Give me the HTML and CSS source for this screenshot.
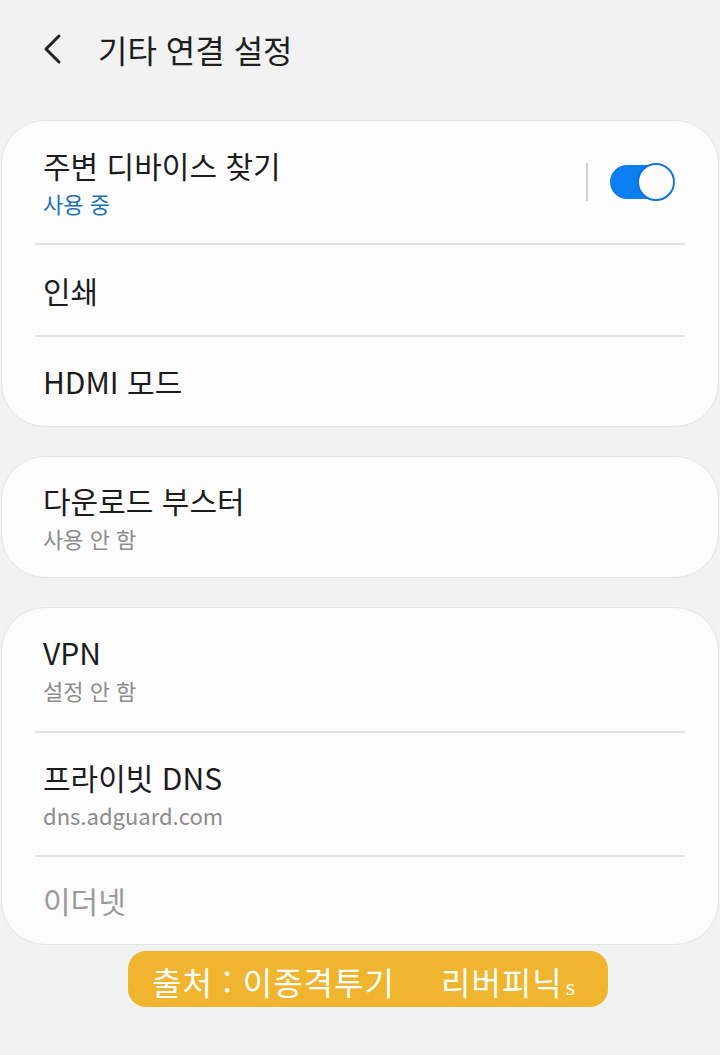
FILE: index.html
```html
<!DOCTYPE html>
<html lang="ko">
<head>
<meta charset="utf-8">
<link rel="stylesheet" href="styles.css">
</head>
<body>
<div class="page">
  <header class="header">
    <svg class="back" width="22" height="32" viewBox="0 0 22 32"><path d="M17 3 L4 16 L17 29" fill="none" stroke="#222" stroke-width="3" stroke-linecap="round" stroke-linejoin="round"/></svg>
    <h1 class="title">기타 연결 설정</h1>
  </header>

  <section class="card">
    <div class="row h122 row-switch">
      <div class="texts">
        <div class="primary">주변 디바이스 찾기</div>
        <div class="secondary on">사용 중</div>
      </div>
      <div class="switch-wrap">
        <span class="vline"></span>
        <span class="switch"><span class="knob"></span></span>
      </div>
    </div>
    <div class="divider"></div>
    <div class="row h90"><div class="primary">인쇄</div></div>
    <div class="divider"></div>
    <div class="row h89"><div class="primary">HDMI 모드</div></div>
  </section>

  <section class="card">
    <div class="row h120">
      <div class="texts">
        <div class="primary">다운로드 부스터</div>
        <div class="secondary">사용 안 함</div>
      </div>
    </div>
  </section>

  <section class="card">
    <div class="row h123">
      <div class="texts">
        <div class="primary">VPN</div>
        <div class="secondary">설정 안 함</div>
      </div>
    </div>
    <div class="divider"></div>
    <div class="row h122">
      <div class="texts">
        <div class="primary">프라이빗 DNS</div>
        <div class="secondary">dns.adguard.com</div>
      </div>
    </div>
    <div class="divider"></div>
    <div class="row h87"><div class="primary disabled">이더넷</div></div>
  </section>

  <div class="badge"><span>출처 : 이종격투기</span><span class="badge-right">리버피닉<span class="s">s</span></span></div>
</div>
</body>
</html>
```

FILE: styles.css
```css
html, body {
  margin: 0;
  padding: 0;
  background: #f2f2f2;
}
body {
  font-family: "Noto Sans CJK KR", "Noto Sans", sans-serif;
  color: #1c1c1c;
}
.page {
  width: 720px;
  height: 1055px;
  overflow: hidden;
}
.header {
  height: 100px;
  display: flex;
  align-items: center;
  box-sizing: border-box;
  padding: 0 0 2px 42px;
}
.back {
  display: block;
}
.title {
  margin: 0 0 0 34px;
  font-size: 32px;
  font-weight: 400;
  color: #1e1e1e;
  letter-spacing: 0;
}
.card {
  margin: 20px 1px 0 1px;
  background: #fcfcfc;
  border: 1px solid #e4e4e4;
  border-radius: 44px;
  overflow: hidden;
}
.card + .card {
  margin-top: 29px;
}
.row {
  display: flex;
  align-items: center;
  padding: 0 41px;
}
.h87 { height: 87px; }
.h89 { height: 89px; }
.h90 { height: 90px; }
.h120 { height: 120px; }
.h122 { height: 122px; }
.h123 { height: 123px; }
.row-switch {
  justify-content: space-between;
  padding-right: 44px;
}
.texts {
  display: flex;
  flex-direction: column;
}
.primary {
  font-size: 30px;
  line-height: 43px;
  letter-spacing: 0;
}
.primary.disabled {
  color: #9b9b9b;
}
.texts .primary {
  margin-top: -2px;
}
.secondary {
  margin-top: 0;
  font-size: 22px;
  line-height: 32px;
  color: #8c8c8c;
  letter-spacing: 0;
}
.secondary.on {
  color: #1b74b9;
}
.divider {
  height: 2px;
  background: #e3e3e3;
  margin: 0 33px 0 33px;
}
.switch-wrap {
  display: flex;
  align-items: center;
  gap: 22px;
}
.vline {
  width: 2px;
  height: 38px;
  background: #cfcfcf;
}
.switch {
  position: relative;
  width: 64px;
  height: 34px;
  border-radius: 17px;
  background: #0b7ff1;
  display: block;
}
.knob {
  position: absolute;
  right: -1px;
  top: -2px;
  width: 34px;
  height: 34px;
  border-radius: 50%;
  background: #fbfbfb;
  border: 2px solid #1473d6;
}
.badge {
  margin: 6px 0 0 128px;
  width: 480px;
  height: 56px;
  border-radius: 18px;
  background: #efb52f;
  color: #ffffff;
  display: flex;
  align-items: center;
  padding: 4px 0 0 24px;
  box-sizing: border-box;
  font-size: 32px;
  letter-spacing: 1px;
}
.badge-right {
  margin-left: 46px;
}
.s {
  font-family: "Liberation Serif", serif;
  font-size: 24px;
  margin-left: 3px;
}
```
